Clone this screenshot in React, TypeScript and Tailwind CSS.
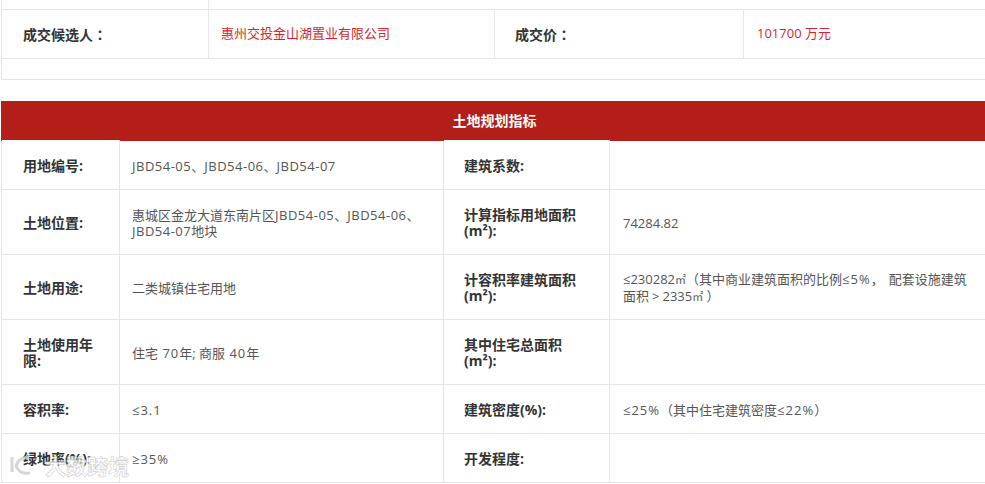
const font = { fontFamily: '"Open Sans", "Noto Sans CJK SC", sans-serif' };

type Row = { h: string; a: React.ReactNode; b: React.ReactNode; c: React.ReactNode; d: React.ReactNode };

const Paren = ({ children }: { children: React.ReactNode }) => (
  <span className="font-['Noto_Sans_CJK_TC']">{children}</span>
);
const Sq = () => <span className="text-[11px]">㎡</span>;
const L = ({ children }: { children: React.ReactNode }) => <span className="tracking-[0.5px]">{children}</span>;
const N = ({ children }: { children: React.ReactNode }) => <span className="tracking-[1px]">{children}</span>;

const rows: Row[] = [
  { h: "h-[49px]", a: "用地编号:", b: <><L>JBD54-05</L>、<L>JBD54-06</L>、<L>JBD54-07</L></>, c: "建筑系数:", d: "" },
  { h: "h-[65px]", a: "土地位置:", b: <>惠城区金龙大道东南片区<L>JBD54-05</L>、<L>JBD54-06</L>、<br /><L>JBD54-07</L>地块</>, c: <>计算指标用地面积<br />(m²):</>, d: "74284.82" },
  { h: "h-[65px]", a: "土地用途:", b: "二类城镇住宅用地", c: <>计容积率建筑面积<br />(m²):</>, d: <>≤230282<Sq /><Paren>（</Paren>其中商业建筑面积的比例<N>≤5%</N><span className="mr-[5px]">，</span>配套设施建筑<br />面积<span className="mx-[3px]">&gt;</span>2335<Sq /> <Paren>）</Paren></> },
  { h: "h-[65px]", a: <>土地使用年<br />限:</>, b: <>住宅<N> 70</N>年; 商服<N> 40</N>年</>, c: <>其中住宅总面积<br />(m²):</>, d: "" },
  { h: "h-[49px]", a: "容积率:", b: <N>≤3.1</N>, c: "建筑密度(%):", d: <><N>≤25%</N><Paren>（</Paren>其中住宅建筑密度<N>≤22%</N><Paren>）</Paren></> },
  { h: "h-[49px]", a: "绿地率(%):", b: <N>≥35%</N>, c: "开发程度:", d: "" },
];

function Label({ children, first, cls }: { children: React.ReactNode; first: boolean; cls: string }) {
  return (
    <div className={`${cls} flex items-center border-r border-[#e6e6e6] pr-2 pt-[2px] text-[14px] font-bold leading-[16px] text-[#333] ${first ? "relative -mt-px border-t border-t-white bg-white" : ""}`}>
      <div>{children}</div>
    </div>
  );
}

function Value({ children, cls }: { children: React.ReactNode; cls: string }) {
  return (
    <div className={`${cls} flex items-center pr-0 pt-[1px] text-[13px] leading-[16px] text-[#555]`}>
      <div>{children}</div>
    </div>
  );
}

export default function App() {
  return (
    <div className="relative h-[484px] w-[985px] overflow-hidden bg-white" style={font}>
      {/* Result table */}
      <div className="ml-px h-[80px] border-b border-l border-[#e4e4e4]">
        <div className="h-[9px] w-[207px] border-r border-[#e8e8e8]" />
        <div className="flex h-[50px] border-y border-[#e4e4e4]">
          <div className="flex w-[207px] items-center border-r border-[#e8e8e8] pl-[21px] pt-[1px] text-[14px] font-bold text-[#333]">成交候选人<Paren>：</Paren></div>
          <div className="flex w-[286px] items-center border-r border-[#e8e8e8] pl-[12px] text-[13px] text-[#d81e2c]">惠州交投金山湖置业有限公司</div>
          <div className="flex w-[249px] items-center border-r border-[#e8e8e8] pl-[20px] pt-[1px] text-[14px] font-bold text-[#333]">成交价<Paren>：</Paren></div>
          <div className="flex flex-1 items-center pl-[13px] text-[13px] text-[#d81e2c]">101700 万元</div>
        </div>
      </div>

      {/* Planning table */}
      <div className="ml-px mt-[21px] border-l border-[#e4e4e4]">
        <div className="-ml-px flex h-[40px] items-center justify-center bg-[#b31e18] pb-[2px] pl-[3px] text-[14px] font-bold text-white">土地规划指标</div>
        {rows.map((r, i) => (
          <div key={i} className={`grid grid-cols-[118px_324px_166px_1fr] border-b border-[#e6e6e6] ${r.h}`}>
            <Label first={i === 0} cls="pl-[21px]">{r.a}</Label>
            <Value cls="border-r border-[#e6e6e6] pl-[12px]">{r.b}</Value>
            <Label first={i === 0} cls="pl-[20px]">{r.c}</Label>
            <Value cls="pl-[13px]">{r.d}</Value>
          </div>
        ))}
      </div>

      {/* Watermark */}
      <div className="absolute left-[9px] top-[454px] flex items-center gap-[10px] text-white/80">
        <svg width="26" height="24" viewBox="0 0 26 24" fill="none" stroke="#cfcfcf" strokeWidth="3" strokeOpacity="0.85">
          <path d="M3 3v15" />
          <path d="M19 3C12 4 8 8 7 12c2 5 7 8 14 7" />
        </svg>
        <span className="text-[21px] font-bold leading-[24px] [-webkit-text-stroke:0.5px_#c4c4c4]">大数跨境</span>
      </div>
    </div>
  );
}
